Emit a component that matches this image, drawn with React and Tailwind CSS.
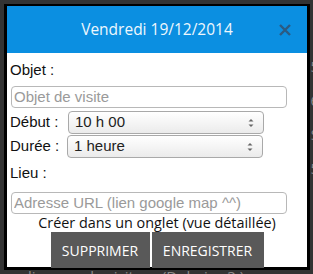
import React from "react";

function Arrows() {
  return (
    <svg width="8" height="12" viewBox="0 0 8 12" className="shrink-0">
      <path d="M1.5 4.5 L4 2 L6.5 4.5 Z" fill="#666" />
      <path d="M1.5 7.5 L4 10 L6.5 7.5 Z" fill="#666" />
    </svg>
  );
}

function Select({ value }) {
  return (
    <div className="w-[196px] h-[23px] flex items-center justify-between pl-[6px] pr-[8px] border border-[#a9a9a9] rounded-[4px] bg-gradient-to-b from-white to-[#ebebeb] text-[15px] text-[#222]">
      <span>{value}</span>
      <Arrows />
    </div>
  );
}

function Field({ placeholder }) {
  return (
    <input
      readOnly
      placeholder={placeholder}
      className="ml-[4px] w-[276px] h-[22px] px-[2px] border border-[#b8b8b8] rounded-[4px] bg-white text-[15px] placeholder-[#9a9a9a] outline-none"
    />
  );
}

export default function App() {
  return (
    <div className="relative w-[313px] h-[274px] overflow-hidden bg-[#333333] font-['Open_Sans',sans-serif]">
      {/* page behind the overlay */}
      <div className="flex flex-col text-[15px] text-[#8a8a8a] leading-[20px]">
        <div className="flex flex-col items-end -mr-[6px] pt-[56px] gap-[14px]">
          <span>5</span>
          <span>6</span>
          <span>S</span>
          <span>5</span>
        </div>
        <div className="mt-[88px] pl-[28px] whitespace-nowrap">
          lien vers le visite ... (Dubai ... 3 )
        </div>
      </div>

      {/* modal */}
      <div className="absolute left-[4px] top-[4px] w-[306px] h-[266px] border-x-[3px] border-t-[2px] border-b-[3px] border-black bg-white flex flex-col">
        <div className="h-[47px] shrink-0 bg-[#0b8fe1] flex items-center justify-center relative">
          <span className="text-[15.5px] text-[#eef7fd]">Vendredi 19/12/2014</span>
          <svg width="12" height="12" viewBox="0 0 12 12" className="absolute right-[16px] top-[18px]">
            <path d="M1 1 L11 11 M11 1 L1 11" stroke="#2c5a82" strokeWidth="2.4" />
          </svg>
        </div>

        <div className="flex flex-col pt-[7px] font-['Liberation_Sans',sans-serif] text-[#111]">
          <div className="pl-[3px] h-[20px] leading-[20px] text-[15px]">Objet :</div>
          <div className="mt-[6px] flex">
            <Field placeholder="Objet de visite" />
          </div>
          <div className="mt-[3px] flex items-center">
            <span className="pl-[3px] w-[61px] text-[15px]">Début :</span>
            <Select value="10 h 00" />
          </div>
          <div className="mt-[1px] flex items-center">
            <span className="pl-[3px] w-[60px] text-[15px]">Durée :</span>
            <Select value="1 heure" />
          </div>
          <div className="mt-[5px] pl-[3px] h-[20px] leading-[20px] text-[15px]">Lieu :</div>
          <div className="mt-[9px] flex">
            <Field placeholder="Adresse URL (lien google map ^^)" />
          </div>
        </div>

        <div className="text-center text-[14.4px] leading-[18px] text-[#111] whitespace-nowrap">
          Créer dans un onglet (vue détaillée)
        </div>

        <div className="flex justify-center gap-[2px] mt-auto">
          <button className="h-[36px] w-[99px] px-0 bg-[#595959] text-white text-[14px] whitespace-nowrap">SUPPRIMER</button>
          <button className="h-[36px] w-[112px] px-0 bg-[#595959] text-white text-[14px] whitespace-nowrap">ENREGISTRER</button>
        </div>
      </div>
    </div>
  );
}
